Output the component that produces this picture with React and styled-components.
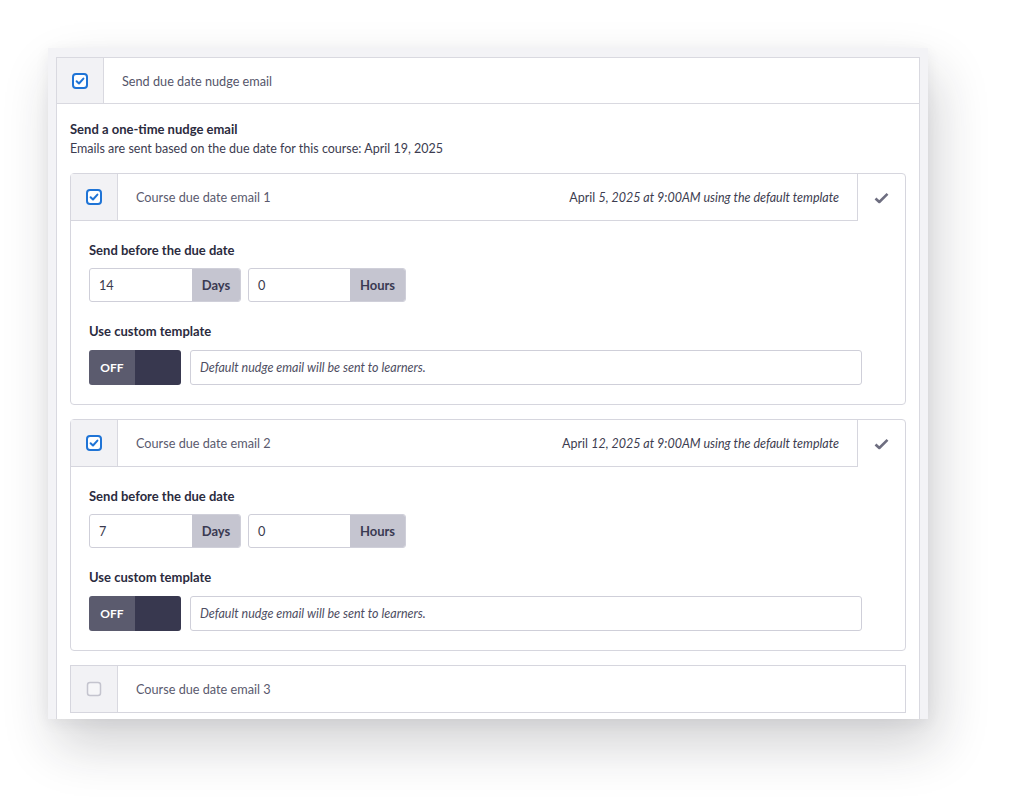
import React from "react";
import styled, { createGlobalStyle } from "styled-components";

const GlobalStyle = createGlobalStyle`
  body {
    margin: 0;
    background: #ffffff;
    font-family: Lato, "Noto Sans", sans-serif;
    color: #2f2f42;
  }
`;

const Page = styled.div`
  min-height: 799px;
  box-sizing: border-box;
  padding: 48px 0 80px 48px;
`;

const Frame = styled.div`
  width: 880px;
  height: 671px;
  box-sizing: border-box;
  padding: 9px 8px 0 8px;
  background: #f3f3f6;
  overflow: hidden;
  box-shadow: 8px 26px 50px rgba(30, 30, 40, 0.2), 0 4px 14px rgba(30, 30, 50, 0.06);
`;

const Panel = styled.div`
  border: 1px solid #d9d9e0;
  background: #ffffff;
`;

const HeaderRow = styled.div`
  display: flex;
  height: 45px;
  border-bottom: 1px solid #d9d9e0;
`;

const CheckCell = styled.div`
  width: 46px;
  flex: none;
  display: flex;
  align-items: center;
  justify-content: center;
  background: #f2f2f5;
  border-right: 1px solid #d9d9e0;
`;

const HeaderTitle = styled.div`
  flex: 1;
  display: flex;
  align-items: center;
  padding-left: 18px;
  font-size: 12.7px;
  color: #55556a;
`;

const Body = styled.div`
  padding: 16px 13px 40px 13px;
`;

const IntroTitle = styled.div`
  font-size: 13px;
  line-height: 19px;
  font-weight: 700;
  color: #2b2b3e;
`;

const IntroText = styled.div`
  font-size: 12.5px;
  line-height: 19px;
  color: #3c3c50;
  margin-bottom: 15px;
`;

const Card = styled.div`
  border: 1px solid #d6d6de;
  border-radius: ${(p) => (p.$collapsed ? "0" : "4px")};
  margin-bottom: 14px;
  background: #ffffff;
`;

const CardHeader = styled.div`
  display: flex;
  height: ${(p) => (p.$open ? 47 : 46)}px;
`;

const HeaderBox = styled.div`
  flex: 1;
  display: flex;
  border-right: ${(p) => (p.$open ? "1px solid #d6d6de" : "none")};
  border-bottom: ${(p) => (p.$open ? "1px solid #d6d6de" : "none")};
`;

const CardCheckCell = styled(CheckCell)`
  width: 46px;
`;

const CardTitle = styled.div`
  flex: 1;
  display: flex;
  align-items: center;
  padding-left: 18px;
  font-size: 12.7px;
  color: #5a5a6e;
`;

const Schedule = styled.div`
  display: flex;
  align-items: center;
  padding-right: 18px;
  font-size: 12.5px;
  color: #3d3d50;
  em {
    font-style: italic;
  }
`;

const StatusCell = styled.div`
  width: 47px;
  flex: none;
  display: flex;
  align-items: center;
  justify-content: center;
`;

const CardBody = styled.div`
  padding: 20px 43px 19px 18px;
`;

const FieldLabel = styled.div`
  font-size: 13px;
  line-height: 18px;
  font-weight: 700;
  color: #2b2b3e;
  margin-bottom: ${(p) => p.$gap || 9}px;
`;

const InputRow = styled.div`
  display: flex;
  gap: 7px;
  margin-bottom: 20px;
`;

const InputGroup = styled.div`
  display: flex;
  width: ${(p) => p.$width}px;
  height: 34px;
  box-sizing: border-box;
  border: 1px solid #cfcfd9;
  border-radius: 3px;
  overflow: hidden;
`;

const NumberValue = styled.div`
  flex: 1;
  display: flex;
  align-items: center;
  padding-left: 9px;
  font-size: 12.7px;
  color: #3a3a4e;
`;

const Addon = styled.div`
  width: ${(p) => p.$width}px;
  display: flex;
  align-items: center;
  justify-content: center;
  background: #c5c5d0;
  font-size: 13px;
  font-weight: 700;
  color: #3a3a52;
`;

const TemplateRow = styled.div`
  display: flex;
  gap: 9px;
`;

const Toggle = styled.div`
  display: flex;
  width: 92px;
  height: 35px;
  border-radius: 3px;
  overflow: hidden;
  flex: none;
`;

const ToggleLabel = styled.div`
  width: 46px;
  display: flex;
  align-items: center;
  justify-content: center;
  background: #5b5b6e;
  color: #ffffff;
  font-size: 12px;
  font-weight: 700;
`;

const ToggleKnob = styled.div`
  flex: 1;
  background: #38384f;
`;

const TemplateField = styled.div`
  flex: 1;
  height: 35px;
  box-sizing: border-box;
  border: 1px solid #cfcfd9;
  border-radius: 3px;
  display: flex;
  align-items: center;
  padding-left: 9px;
  font-size: 12.5px;
  font-style: italic;
  color: #4e4e62;
`;

const Checkbox = ({ checked }) =>
  checked ? (
    <svg width="16" height="16" viewBox="0 0 16 16">
      <rect x="1" y="1" width="14" height="14" rx="3" fill="#ffffff" stroke="#1f74d6" strokeWidth="2" />
      <path d="M4.6 8.2 L7 10.5 L11.4 5.6" fill="none" stroke="#1f74d6" strokeWidth="2" strokeLinecap="round" strokeLinejoin="round" />
    </svg>
  ) : (
    <svg width="16" height="16" viewBox="0 0 16 16">
      <rect x="1.5" y="1.5" width="13" height="13" rx="2.5" fill="#f6f6f8" stroke="#c4c4ce" strokeWidth="1.5" />
    </svg>
  );

const DoneMark = () => (
  <svg width="15" height="12" viewBox="0 0 15 12">
    <path d="M1.5 6.5 L5.3 10 L13.5 1.8" fill="none" stroke="#6e6e80" strokeWidth="2.6" strokeLinejoin="round" />
  </svg>
);

const emails = [
  { title: "Course due date email 1", day: "5", days: "14", open: true },
  { title: "Course due date email 2", day: "12", days: "7", open: true },
  { title: "Course due date email 3", open: false },
];

const EmailCard = ({ email }) => (
  <Card $collapsed={!email.open}>
    <CardHeader $open={email.open}>
      <HeaderBox $open={email.open}>
        <CardCheckCell>
          <Checkbox checked={email.open} />
        </CardCheckCell>
        <CardTitle>{email.title}</CardTitle>
        {email.open && (
          <Schedule>
            April&nbsp;<em>{email.day}, 2025 at 9:00AM using the default template</em>
          </Schedule>
        )}
      </HeaderBox>
      {email.open && (
        <StatusCell>
          <DoneMark />
        </StatusCell>
      )}
    </CardHeader>
    {email.open && (
      <CardBody>
        <FieldLabel>Send before the due date</FieldLabel>
        <InputRow>
          <InputGroup $width={152}>
            <NumberValue>{email.days}</NumberValue>
            <Addon $width={48}>Days</Addon>
          </InputGroup>
          <InputGroup $width={158}>
            <NumberValue>0</NumberValue>
            <Addon $width={55}>Hours</Addon>
          </InputGroup>
        </InputRow>
        <FieldLabel $gap={10}>Use custom template</FieldLabel>
        <TemplateRow>
          <Toggle>
            <ToggleLabel>OFF</ToggleLabel>
            <ToggleKnob />
          </Toggle>
          <TemplateField>Default nudge email will be sent to learners.</TemplateField>
        </TemplateRow>
      </CardBody>
    )}
  </Card>
);

export default function App() {
  return (
    <>
      <GlobalStyle />
      <Page>
        <Frame>
          <Panel>
            <HeaderRow>
              <CheckCell>
                <Checkbox checked />
              </CheckCell>
              <HeaderTitle>Send due date nudge email</HeaderTitle>
            </HeaderRow>
            <Body>
              <IntroTitle>Send a one-time nudge email</IntroTitle>
              <IntroText>Emails are sent based on the due date for this course: April 19, 2025</IntroText>
              {emails.map((e) => (
                <EmailCard key={e.title} email={e} />
              ))}
            </Body>
          </Panel>
        </Frame>
      </Page>
    </>
  );
}
